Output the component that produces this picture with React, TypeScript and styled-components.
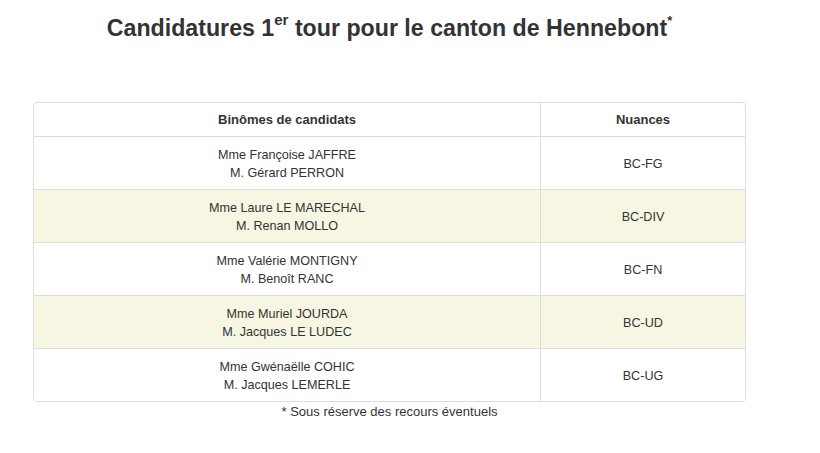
import React from "react";
import styled, { createGlobalStyle } from "styled-components";

const Global = createGlobalStyle`
  html, body { margin: 0; padding: 0; background: #fff; }
  body { font-family: "Liberation Sans", Arial, Helvetica, sans-serif; color: #333; }
`;

const Page = styled.div`
  width: 713px;
  margin-left: 33px;
  padding-top: 12px;
  display: flex;
  flex-direction: column;
  align-items: center;
`;

const Title = styled.h1`
  margin: 0;
  font-size: 23.2px;
  font-weight: bold;
  line-height: 32px;
  color: #333;
  sup { font-size: 15px; line-height: 0; position: relative; top: -2px; }
  sup.star { font-size: 13px; }
`;

const TableBox = styled.div`
  margin-top: 58px;
  width: 713px;
  border: 1px solid #ddd;
  border-radius: 4px;
  overflow: hidden;
  box-sizing: border-box;
`;

const Table = styled.table`
  width: 100%;
  border-collapse: collapse;
  font-size: 12.6px;
`;

const Th = styled.th<{ $last?: boolean }>`
  height: 33px;
  padding: 0;
  font-size: 13px;
  font-weight: bold;
  text-align: center;
  border-bottom: 1px solid #ddd;
  border-left: ${(p) => (p.$last ? "1px solid #ddd" : "none")};
  width: ${(p) => (p.$last ? "204px" : "auto")};
`;

const Tr = styled.tr<{ $striped: boolean }>`
  background: ${(p) => (p.$striped ? "#f6f6e3" : "#fff")};
`;

const Td = styled.td<{ $last?: boolean; $noBottom?: boolean }>`
  height: 50px;
  padding: 2px 0 0;
  text-align: center;
  line-height: 18px;
  border-bottom: ${(p) => (p.$noBottom ? "none" : "1px solid #ddd")};
  border-left: ${(p) => (p.$last ? "1px solid #ddd" : "none")};
`;

const Note = styled.div`
  margin-top: 2px;
  font-size: 13px;
  line-height: 16px;
  color: #333;
`;

const rows = [
  ["Mme Françoise JAFFRE", "M. Gérard PERRON", "BC-FG"],
  ["Mme Laure LE MARECHAL", "M. Renan MOLLO", "BC-DIV"],
  ["Mme Valérie MONTIGNY", "M. Benoît RANC", "BC-FN"],
  ["Mme Muriel JOURDA", "M. Jacques LE LUDEC", "BC-UD"],
  ["Mme Gwénaëlle COHIC", "M. Jacques LEMERLE", "BC-UG"],
];

export default function App() {
  return (
    <>
      <Global />
      <Page>
        <Title>
          Candidatures 1<sup>er</sup> tour pour le canton de Hennebont<sup className="star">*</sup>
        </Title>
        <TableBox>
          <Table>
            <thead>
              <tr>
                <Th>Binômes de candidats</Th>
                <Th $last>Nuances</Th>
              </tr>
            </thead>
            <tbody>
              {rows.map((r, i) => (
                <Tr key={i} $striped={i % 2 === 1}>
                  <Td $noBottom={i === rows.length - 1}>
                    {r[0]}
                    <br />
                    {r[1]}
                  </Td>
                  <Td $last $noBottom={i === rows.length - 1}>{r[2]}</Td>
                </Tr>
              ))}
            </tbody>
          </Table>
        </TableBox>
        <Note>* Sous réserve des recours éventuels</Note>
      </Page>
    </>
  );
}
